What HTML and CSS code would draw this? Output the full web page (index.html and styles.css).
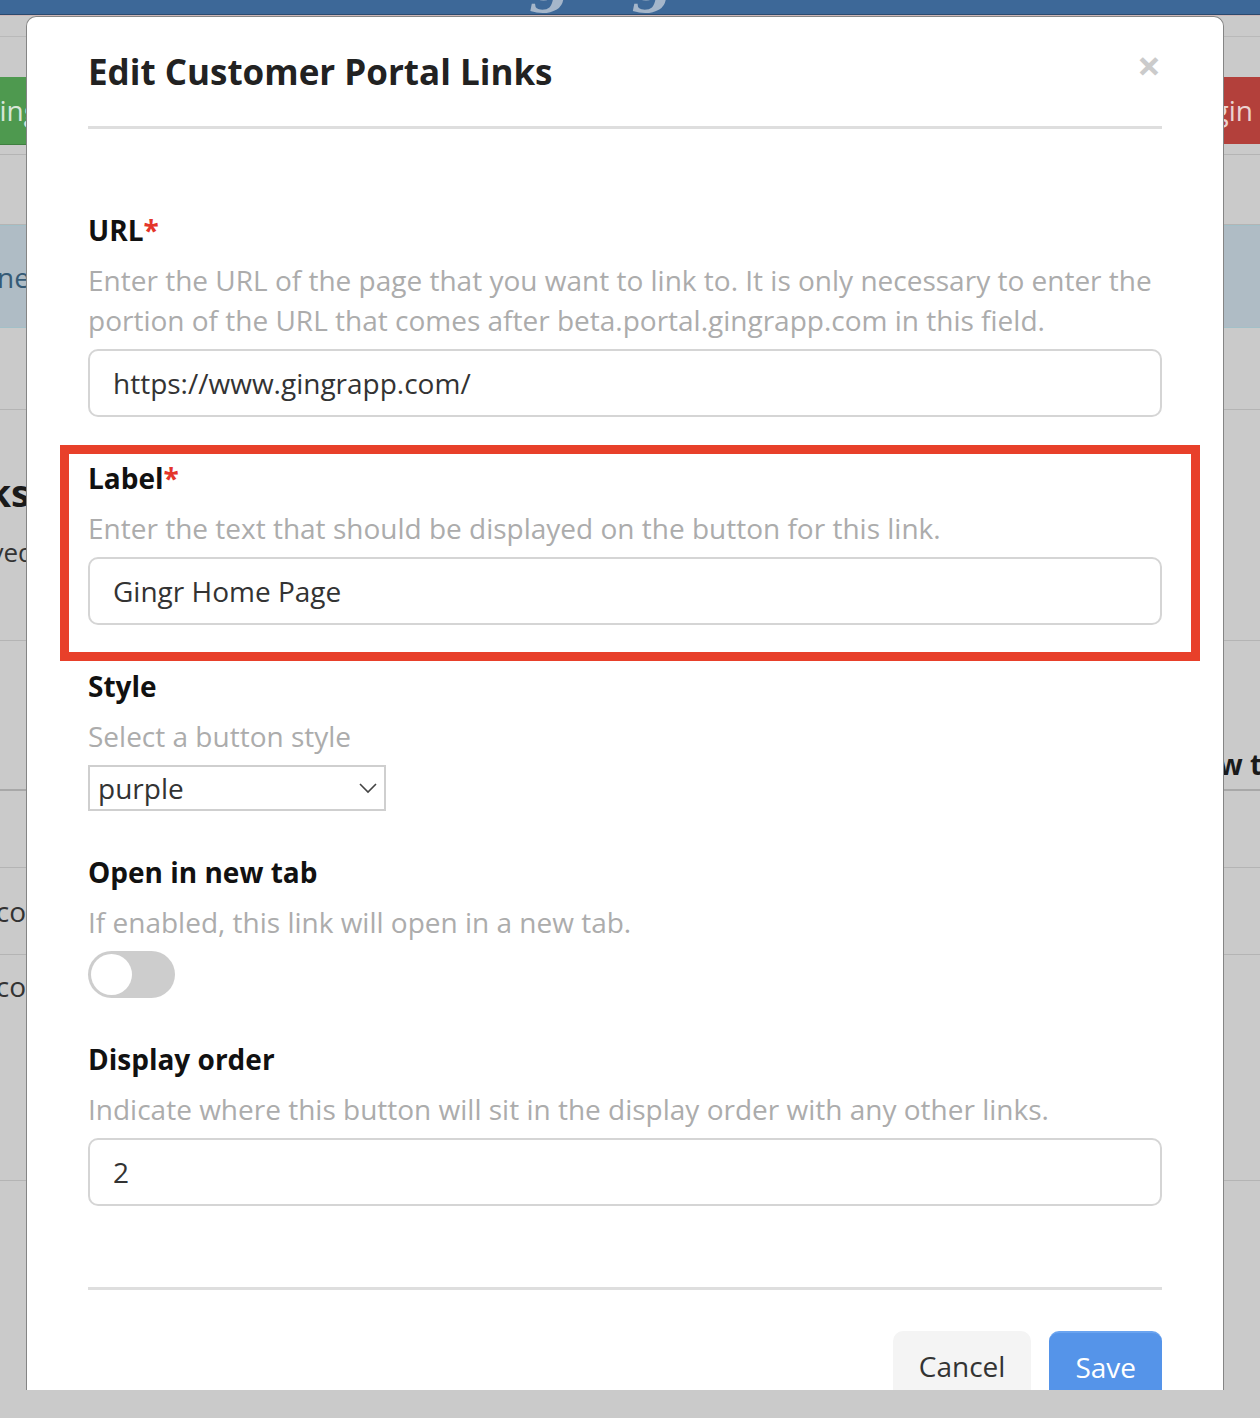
FILE: index.html
```html
<!DOCTYPE html>
<html>
<head>
  <meta name="viewport" content="width=device-width, initial-scale=1.0">
  <link rel="stylesheet" href="styles.css">
</head>
<body>
  <div class="page">
    <div class="navbar"><span class="logo">gingr</span></div>
    <div class="subnav"></div>
    <div class="actions">
      <div class="clip-left"><span class="btn-bg btn-green">Waiting</span></div>
      <div class="clip-right"><span class="btn-bg btn-red">Login</span></div>
    </div>
    <div class="row row-gap"></div>
    <div class="info"><div class="clip-left">Everyone</div></div>
    <div class="row row-mid"></div>
    <div class="heading-row">
      <div class="clip-left page-title">Portal Links</div>
      <div class="clip-left page-sub">Links received</div>
    </div>
    <div class="row row-tall"><div class="clip-right page-bold">How to</div></div>
    <div class="row row-list"></div>
    <div class="row row-list row-site"><div class="clip-left">gingrapp.com</div></div>
    <div class="row row-last"><div class="clip-left">gingrapp.com</div></div>
  </div>

  <div class="modal">
    <div class="modal-header">
      <h1>Edit Customer Portal Links</h1>
      <button class="close">&times;</button>
    </div>

    <div class="modal-body">
      <div class="form-group">
        <label>URL<span class="req">*</span></label>
        <p class="help">Enter the URL of the page that you want to link to. It is only necessary to enter the portion of the URL that comes after beta.portal.gingrapp.com in this field.</p>
        <input class="text-input" type="text" value="https://www.gingrapp.com/">
      </div>

      <div class="form-group">
        <label>Label<span class="req">*</span></label>
        <p class="help">Enter the text that should be displayed on the button for this link.</p>
        <input class="text-input" type="text" value="Gingr Home Page">
        <div class="highlight"></div>
      </div>

      <div class="form-group">
        <label>Style</label>
        <p class="help">Select a button style</p>
        <div class="select">
          <span>purple</span>
          <svg width="18" height="12" viewBox="0 0 18 12"><polyline points="1,2 9,10 17,2" fill="none" stroke="#444" stroke-width="1.6"/></svg>
        </div>
      </div>

      <div class="form-group">
        <label>Open in new tab</label>
        <p class="help">If enabled, this link will open in a new tab.</p>
        <div class="toggle"><div class="knob"></div></div>
      </div>

      <div class="form-group">
        <label>Display order</label>
        <p class="help">Indicate where this button will sit in the display order with any other links.</p>
        <input class="text-input" type="text" value="2">
      </div>
    </div>

    <div class="modal-footer">
      <button class="btn btn-cancel">Cancel</button>
      <button class="btn btn-save">Save</button>
    </div>
  </div>
</body>
</html>
```

FILE: styles.css
```css
body {
  margin: 0;
  padding: 0;
  height: 1418px;
  overflow: hidden;
  background: #cacaca;
  font-family: "Open Sans", "Noto Sans", sans-serif;
  position: relative;
}

/* dimmed page behind the dialog */
.page {
  width: 1260px;
  overflow: hidden;
  color: #1a1a1a;
}

.navbar {
  height: 14px;
  background: #3d6898;
  border-bottom: 1px solid #2b4a6e;
  overflow: hidden;
  display: flex;
  justify-content: center;
}

.logo {
  margin-top: -56px;
  margin-left: -30px;
  font-family: "DejaVu Serif", serif;
  font-style: italic;
  font-weight: bold;
  font-size: 60px;
  color: #a5b6ca;
  letter-spacing: -2px;
}

.subnav {
  height: 20px;
  border-top: 1px solid #cdb7b7;
  border-bottom: 1px solid #b9b9b9;
}

.actions {
  height: 118px;
  display: flex;
  justify-content: space-between;
  align-items: center;
  border-bottom: 1px solid #b4b4b4;
  padding-top: 30px;
  box-sizing: border-box;
}

.clip-left {
  width: 30px;
  display: flex;
  justify-content: flex-end;
  white-space: nowrap;
}

.actions .clip-left {
  width: 49px;
}

.clip-right {
  width: 60px;
  display: flex;
  justify-content: flex-start;
  white-space: nowrap;
}

.btn-bg {
  height: 67px;
  line-height: 67px;
  font-size: 28px;
  color: #d9e6d9;
  padding: 0 10px;
}

.btn-green {
  background: #4e994f;
  border-bottom: 1px solid #3f7f40;
}

.btn-red {
  background: #b3403b;
  color: #ecd3d2;
  margin-left: -28px;
  padding-right: 40px;
}

.row {
  border-bottom: 1px solid #b4b4b4;
  display: flex;
  justify-content: space-between;
  align-items: center;
}

.row-gap {
  height: 69px;
}

.info {
  height: 101px;
  background: #afbcc5;
  border-top: 1px solid #a2c0c8;
  border-bottom: 1px solid #a2c0c8;
  display: flex;
  align-items: center;
  font-size: 28px;
  color: #355a76;
}

.row-mid {
  height: 81px;
}

.heading-row {
  height: 231px;
  border-bottom: 1px solid #b4b4b4;
  padding-top: 58px;
  box-sizing: border-box;
}

.page-title {
  font-size: 38px;
  font-weight: bold;
  line-height: 48px;
}

.page-sub {
  width: 34px;
  font-size: 26px;
  line-height: 40px;
  margin-top: 16px;
  color: #333;
}

.row-tall {
  height: 150px;
  border-bottom: 2px solid #a8a8a8;
  justify-content: flex-end;
  align-items: flex-end;
  padding-bottom: 6px;
  box-sizing: border-box;
}

.row-tall .clip-right {
  width: 120px;
  margin-right: -40px;
}

.page-bold {
  font-size: 28px;
  font-weight: bold;
}

.row-list {
  height: 76px;
  font-size: 28px;
}

.row-site {
  height: 86px;
}

.row-list .clip-left,
.row-last .clip-left {
  width: 52px;
  color: #333;
}

.row-last {
  height: 226px;
  font-size: 28px;
  align-items: flex-start;
  padding-top: 12px;
  box-sizing: border-box;
}

/* dialog */
.modal {
  position: absolute;
  top: 16px;
  left: 26px;
  width: 1198px;
  height: 1374px;
  box-sizing: border-box;
  background: #fff;
  border: 1px solid #858585;
  border-bottom: none;
  border-radius: 10px 10px 0 0;
  overflow: hidden;
  padding: 0 61px;
}

.modal-header {
  display: flex;
  justify-content: space-between;
  align-items: flex-start;
  padding-top: 31px;
  padding-bottom: 30px;
  border-bottom: 3px solid #dedede;
}

.modal-header h1 {
  margin: 0;
  font-size: 35px;
  line-height: 48px;
  font-weight: 700;
  color: #222;
}

.close {
  border: none;
  background: none;
  padding: 0;
  margin: -3px 1px 0 0;
  font-family: "Open Sans", sans-serif;
  font-size: 42px;
  line-height: 40px;
  font-weight: bold;
  color: #cbcbcb;
}

.modal-body {
  padding: 81px 0 81px;
}

.form-group {
  position: relative;
  margin-bottom: 41px;
}

.form-group:last-child {
  margin-bottom: 0;
}

.form-group label {
  display: block;
  font-size: 28px;
  line-height: 40px;
  font-weight: 700;
  color: #111;
}

.req {
  color: #e4352b;
}

.help {
  margin: 10px 0 9px;
  font-size: 28px;
  line-height: 40px;
  color: #acacac;
}

.text-input {
  display: block;
  width: 100%;
  height: 68px;
  box-sizing: border-box;
  border: 2px solid #d5d5d5;
  border-radius: 10px;
  padding: 0 23px;
  font-family: "Open Sans", sans-serif;
  font-size: 28px;
  color: #333;
  outline: none;
}

.highlight {
  position: absolute;
  top: -13px;
  left: -28px;
  right: -38px;
  bottom: -36px;
  border: 9px solid #e8402a;
  pointer-events: none;
}

.select {
  width: 298px;
  height: 46px;
  box-sizing: border-box;
  border: 2px solid #cfcfcf;
  display: flex;
  justify-content: space-between;
  align-items: center;
  padding: 0 7px 0 8px;
  font-size: 28px;
  color: #333;
}

.toggle {
  width: 87px;
  height: 47px;
  border-radius: 24px;
  background: #cdcdcd;
  padding: 3px;
  box-sizing: border-box;
}

.knob {
  width: 41px;
  height: 41px;
  border-radius: 50%;
  background: #fff;
}

.modal-footer {
  border-top: 3px solid #dedede;
  padding-top: 41px;
  display: flex;
  justify-content: flex-end;
  gap: 18px;
}

.btn {
  height: 70px;
  border: none;
  border-radius: 10px;
  padding: 0 26px;
  font-family: "Open Sans", sans-serif;
  font-size: 28px;
}

.btn-cancel {
  background: #f4f4f4;
  color: #333;
}

.btn-save {
  background: #5594e9;
  color: #fff;
  border-top: 2px solid #6aa4f0;
}
```
